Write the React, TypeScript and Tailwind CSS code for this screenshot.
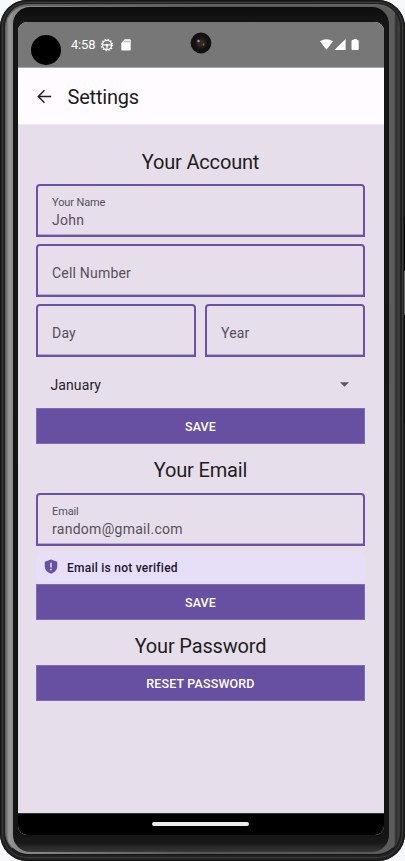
import type { ReactNode } from "react";

function SectionTitle({ children, className }: { children: ReactNode; className: string }) {
  return (
    <h2 className={`text-center text-[20px] leading-[24px] font-normal tracking-[-0.17px] text-[#1f1d21] ${className}`}>
      {children}
    </h2>
  );
}

function Field({ label, value }: { label: string; value?: string }) {
  return (
    <div className="flex h-[53px] min-w-0 flex-1 flex-col justify-center rounded-t-[4px] border-2 border-[#6a52a6] px-[14px] text-[#55505a] shadow-[inset_0_-1px_0_#b5aac6]">
      {value ? (
        <>
          <span className="mt-[3px] text-[11px] leading-[16px] tracking-[-0.12px]">{label}</span>
          <span className="text-[14px] leading-[19px] tracking-[0.28px]">{value}</span>
        </>
      ) : (
        <span className="mt-[5px] text-[14px] leading-[20px] tracking-[0.2px]">{label}</span>
      )}
    </div>
  );
}

function FilledButton({ children, className }: { children: ReactNode; className: string }) {
  return (
    <button className={`flex h-[36px] w-full shrink-0 items-center justify-center border border-[#7f6cb2] bg-[#6750a2] pt-[2px] text-[12.5px] leading-[16px] font-medium tracking-[0.15px] text-white ${className}`}>
      {children}
    </button>
  );
}

function StatusBar() {
  return (
    <div className="relative flex h-[46px] shrink-0 items-center border-b border-[#aaa8aa] bg-[#777777] text-white">
      <span className="ml-[13px] mt-[10px] size-[30px] rounded-full bg-black" />
      <span className="ml-[10px] w-[25px] text-[13px] leading-[16px] tracking-[-0.2px] whitespace-nowrap">4:58</span>
      <svg className="ml-[4px] size-[14px]" viewBox="0 0 14 14" fill="none" stroke="white">
        <circle cx="7" cy="7" r="4.6" strokeWidth="1.4" />
        <circle cx="7" cy="7" r="5.7" strokeWidth="1.2" strokeDasharray="1.3 1.68" />
        <path d="M3 6.8h8M7 7v4" strokeWidth="1.3" />
        <circle cx="7" cy="7" r="1.2" fill="white" stroke="none" />
      </svg>
      <svg className="ml-[7px] h-[12px] w-[10px]" viewBox="0 0 10 12">
        <path d="M3.7.3H8.8Q9.7.3 9.7 1.2V10.5Q9.7 11.5 8.7 11.5H1.2Q.3 11.5.3 10.5V4Z" fill="white" />
        <path d="M4 1.6v1.8M6 1.6v1.8M8 1.6v1.8" stroke="#777" strokeWidth=".8" />
      </svg>
      <svg className="absolute left-[172px] top-[10px] size-[22px]" viewBox="0 0 22 22">
        <circle cx="11" cy="11" r="10.4" fill="#111" />
        <circle cx="11" cy="11" r="6" fill="#1e1b1a" />
        <circle cx="11" cy="11" r="3.6" fill="#332a26" />
        <circle cx="8.5" cy="9" r="1.2" fill="#a99c98" />
        <circle cx="13.5" cy="12.5" r="1" fill="#9b6930" />
      </svg>
      <svg className="ml-auto mr-[24px] h-[13px] w-[41px]" viewBox="0 0 41 13" fill="white">
        <path d="M1 3.3Q7.3-.8 14 3.3L7.5 11.8Z" />
        <path d="M26.6 1V12H15.4Z" />
        <path d="M34.5 1.1h3.2v1h1q1 0 1 1v7.8q0 1-1 1h-5.2q-1 0-1-1V3.1q0-1 1-1h1Z" />
      </svg>
    </div>
  );
}

function Screen() {
  return (
    <div className="flex h-[813px] w-[366px] shrink-0 flex-col overflow-hidden rounded-[9px] bg-[#e6dfeb]">
      <StatusBar />
      <header className="flex h-[57px] shrink-0 items-center border-b border-[#eee8f0] bg-[#fffbff] text-[#1f1c20]">
        <svg className="ml-[19px] size-[15px]" viewBox="0 0 15 15" fill="none" stroke="currentColor" strokeWidth="1.4">
          <path d="M14.2 7.5H1.5M7.5 1.2L1.3 7.5L7.5 13.8" />
        </svg>
        <h1 className="mt-[2px] ml-[15.5px] text-[20px] leading-[24px] font-normal tracking-[-0.2px]">Settings</h1>
      </header>
      <main className="flex min-h-0 flex-1 flex-col pl-[18px] pr-[19px]">
        <SectionTitle className="mt-[25px]">Your Account</SectionTitle>
        <div className="mt-[10px] flex flex-col gap-[7px]">
          <div className="flex"><Field label="Your Name" value="John" /></div>
          <div className="flex"><Field label="Cell Number" /></div>
          <div className="flex gap-[9px]">
            <Field label="Day" />
            <Field label="Year" />
          </div>
        </div>
        <div className="mt-[8px] flex h-[40px] items-center justify-between pl-[14.5px] pr-[16.5px] text-[14px] leading-[20px] tracking-[0.1px] text-[#252326]">
          <span>January</span>
          <svg className="mb-[1px] h-[5px] w-[9px]" viewBox="0 0 9 5"><path d="M0 .2H9L4.5 4.8Z" fill="#5b565f" /></svg>
        </div>
        <FilledButton className="mt-[3px]">SAVE</FilledButton>
        <SectionTitle className="mt-[14px]">Your Email</SectionTitle>
        <div className="mt-[11px] flex"><Field label="Email" value="random@gmail.com" /></div>
        <div className="mt-[6px] flex h-[29px] items-center rounded-[6px] bg-[#e7def7]">
          <svg className="ml-[8px] h-[15px] w-[14px]" viewBox="0 0 14 15">
            <path d="M7 .4L13.2 2.7V7.2C13.2 10.8 10.6 13.7 7 14.6C3.4 13.7.8 10.8.8 7.2V2.7Z" fill="#6750a2" />
            <path d="M7 3.7V8.4M7 9.7V11.2" stroke="#e7def7" strokeWidth="1.5" />
          </svg>
          <span className="mt-[2px] ml-[9px] text-[12px] leading-[16px] font-medium tracking-[0.25px] text-[#211536]">Email is not verified</span>
        </div>
        <FilledButton className="mt-[3px]">SAVE</FilledButton>
        <SectionTitle className="mt-[14px]">Your Password</SectionTitle>
        <FilledButton className="mt-[7px]">RESET PASSWORD</FilledButton>
      </main>
      <nav className="flex h-[22px] shrink-0 items-center border-t border-[#343239] bg-black pb-[2px]">
        <span className="ml-[134px] h-[4px] w-[97px] rounded-full bg-[#ececec]" />
      </nav>
    </div>
  );
}

export default function App() {
  return (
    <div className="h-[861px] w-[405px] overflow-hidden bg-[#f7f8fc] font-['Roboto',sans-serif]">
      <div className="relative h-[861px] w-[405px] overflow-hidden rounded-[27px] bg-[#222222] px-[2px] pt-[2px] pb-[3px] shadow-[inset_0_0_0_1px_#161616]">
        <div className="h-full rounded-[25px] border border-[#3c3c3c] bg-[#202020] px-[2px] pt-[1px] pb-[2px]">
          <div className="h-full rounded-[23px] border border-t-2 border-[#626262] border-r-[#3a3a3a] border-b-[#161616] bg-[linear-gradient(90deg,#666_0,#999_3px,#8c8c8c_7px,#555_50%,#5c5c5c_388px,#2c2c2c_390px,#444_100%)] pt-[1px] pr-[10px] pb-[2px] pl-[7px]">
            <div className="flex h-full rounded-[17px] bg-[linear-gradient(#0d0d0d_0,#151515_15px,#141414_828px,#191919_836px,#383838_100%)] pt-[15px] pl-[5px]">
              <Screen />
            </div>
          </div>
        </div>
        <span className="absolute top-[217px] right-0 h-[54px] w-px bg-[#050505]" />
        <span className="absolute top-[271px] right-0 h-[44px] w-px bg-[#666]" />
        <span className="absolute top-[317px] right-0 h-[106px] w-px bg-[#080808]" />
      </div>
    </div>
  );
}
